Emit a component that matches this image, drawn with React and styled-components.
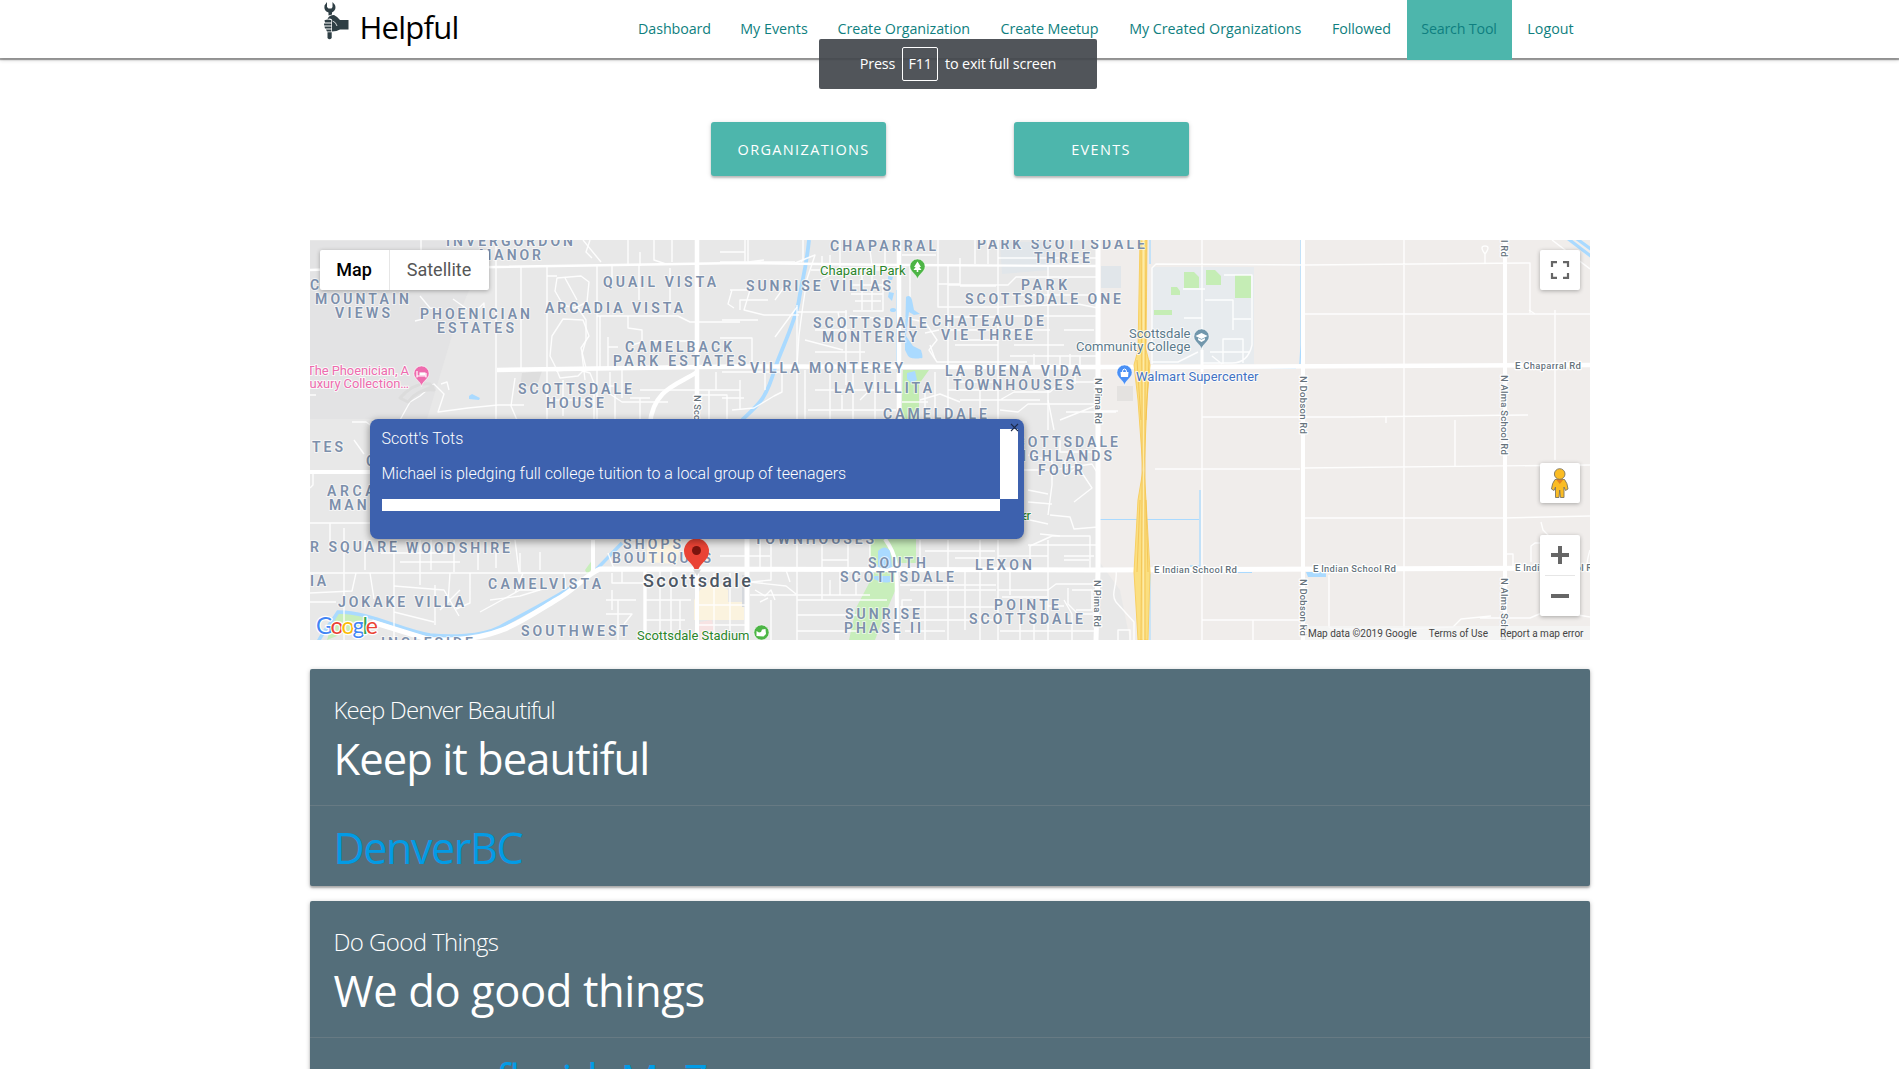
import React from "react";
import styled, { createGlobalStyle } from "styled-components";

const GlobalStyle = createGlobalStyle`
  * { box-sizing: border-box; }
  html, body { margin: 0; background: #fff; }
  body {
    height: 100vh;
    overflow: hidden;
    font-family: "Segoe UI", "Open Sans", "Noto Sans", sans-serif;
  }
`;

/* ---------- navigation ---------- */

const Nav = styled.nav`
  height: 58px;
  background: #fff;
  box-shadow: 0 2px 1px rgba(0, 0, 0, 0.33), 0 2px 4px rgba(0, 0, 0, 0.2);
`;

const NavInner = styled.div`
  width: 1280px;
  margin: 0 auto;
  display: flex;
  justify-content: space-between;
  align-items: flex-start;
`;

const Brand = styled.a`
  display: flex;
  align-items: flex-start;
  padding-left: 13px;
  gap: 9px;
  color: #000;
  font-size: 31px;
  line-height: 55px;
  letter-spacing: -0.75px;
`;

const NavList = styled.ul`
  display: flex;
  list-style: none;
  margin: 0;
  padding: 0;
`;

const NavItem = styled.li`
  width: ${(p) => p.$w}px;
  height: 60px;
  line-height: 57px;
  text-align: center;
  white-space: nowrap;
  font-size: 14.3px;
  letter-spacing: ${(p) => p.$ls || 0}px;
  color: #0f7f80;
  background: ${(p) => (p.$active ? "#4db6ac" : "transparent")};
`;

/* ---------- browser notice ---------- */

const Notice = styled.div`
  position: absolute;
  left: 819px;
  top: 39px;
  width: 278px;
  height: 50px;
  padding-bottom: 1px;
  border-radius: 2px;
  background: rgba(68, 72, 77, 0.93);
  color: #fff;
  display: flex;
  align-items: center;
  justify-content: center;
  font-size: 14.4px;
  letter-spacing: -0.2px;
  white-space: nowrap;
  gap: 7px;
`;

const Key = styled.span`
  width: 36px;
  height: 34px;
  border: 1px solid #fff;
  border-radius: 2px;
  display: flex;
  align-items: center;
  justify-content: center;
`;

/* ---------- page body ---------- */

const Main = styled.main`
  width: 1280px;
  margin: 0 auto;
  padding-top: 64px;
`;

const ButtonRow = styled.div`
  display: flex;
  justify-content: center;
  gap: 128px;
  height: 118px;
`;

const Button = styled.button`
  width: 175px;
  height: 54px;
  border: 0;
  border-radius: 3px;
  padding: ${(p) => p.$pad || "0"};
  text-align: ${(p) => (p.$pad ? "left" : "center")};
  background: #4db6ac;
  color: #fff;
  font-family: inherit;
  font-size: 14.5px;
  letter-spacing: ${(p) => p.$ls}px;
  text-transform: uppercase;
  white-space: nowrap;
  box-shadow: 0 2px 2px rgba(0, 0, 0, 0.2), 0 1px 5px rgba(0, 0, 0, 0.14);
`;

const MapFrame = styled.section`
  position: relative;
  height: 400px;
  overflow: hidden;
  background: #e8e8e8;
  font-family: Roboto, sans-serif;
`;

const MapSvg = styled.svg`
  display: block;
  width: 1280px;
  height: 400px;
`;

const MapTypes = styled.div`
  position: absolute;
  left: 10px;
  top: 10px;
  display: flex;
  height: 40px;
  background: #fff;
  border-radius: 2px;
  box-shadow: 0 1px 4px rgba(0, 0, 0, 0.3);
`;

const MapType = styled.div`
  width: ${(p) => p.$w}px;
  line-height: 40px;
  text-align: center;
  font-size: 18px;
  font-weight: ${(p) => (p.$on ? 500 : 400)};
  color: ${(p) => (p.$on ? "#000" : "#565656")};
  border-left: ${(p) => (p.$on ? "0" : "1px solid #e6e6e6")};
`;

const Control = styled.div`
  position: absolute;
  right: 10px;
  top: ${(p) => p.$top}px;
  width: 40px;
  height: ${(p) => p.$h || 40}px;
  background: #fff;
  border-radius: 2px;
  box-shadow: 0 1px 4px rgba(0, 0, 0, 0.3);
  svg { display: block; }
`;

const Credits = styled.div`
  position: absolute;
  right: 0;
  bottom: 0;
  height: 14px;
  padding: 0 6px 0 3px;
  display: flex;
  gap: 12px;
  background: rgba(245, 245, 245, 0.75);
  color: #444;
  font-size: 10px;
  line-height: 15px;
  letter-spacing: 0;
  white-space: nowrap;
`;

const InfoWindow = styled.div`
  position: absolute;
  left: 60px;
  top: 179px;
  width: 654px;
  height: 120px;
  padding: 10px 6px 28px 12px;
  border-radius: 8px;
  background: #3d61ae;
  color: #fff;
  box-shadow: 0 2px 7px 1px rgba(0, 0, 0, 0.35);
  display: grid;
  grid-template-columns: 618px 18px;
  grid-template-rows: 70px 12px;
  font-size: 16px;
  font-weight: 300;
`;

const InfoText = styled.div`
  p { margin: 0 0 16px; line-height: 19px; }
`;

const ScrollTrack = styled.div`
  background: #fff;
`;

const CloseIcon = styled.svg`
  position: absolute;
  right: 5px;
  top: 4px;
`;

const Card = styled.article`
  height: 217px;
  margin-bottom: 15px;
  border-radius: 2px;
  background: #546e7a;
  color: #fff;
  box-shadow: 0 2px 2px rgba(0, 0, 0, 0.24), 0 1px 5px rgba(0, 0, 0, 0.22);
`;

const Cards = styled.div`
  padding-top: 29px;
`;

const CardBody = styled.div`
  height: 136px;
  padding: 24px 24px 0;
`;

const CardTitle = styled.div`
  font-size: 24px;
  font-weight: 300;
  line-height: 33px;
  letter-spacing: ${(p) => p.$ls}px;
`;

const CardText = styled.div`
  font-size: 43.5px;
  line-height: 66px;
  letter-spacing: ${(p) => p.$ls}px;
`;

const CardAction = styled.div`
  height: 81px;
  padding: 2px 24px 0;
  border-top: 1px solid rgba(160, 160, 160, 0.25);
  color: #039be5;
  font-size: 43px;
  line-height: 80px;
  letter-spacing: ${(p) => p.$ls}px;
`;

/* ---------- map data ---------- */

const AREAS = [
  ["M310 241c0 30 0 0 0 0h175l-8 30-20 48-30 100h-117z", "#e3e3e4"],
  ["M1098 240H1590V640H1130L1120 590L1098 560Z", "#f0edeb"],
  ["M1000 242h50v28l-48 4zM1101 266h20v22h-20z", "#e1e6ea"],
  ["M1152 267H1254V364H1152Z", "#e7ebee"],
  ["M522 373l20-2-4 12-18 6z", "#dedede"],
  ["M647 540h34l-4 24-30-2zM700 590l14-12 14 12v12h16v18h-50v-20z", "#fbf3df"],
  ["M700 622l12-2 4 20h-20z", "#f7e3e3"],
  ["M1117 386h16v15h-16z", "#e4e2e0"],
  ["M742 575h6v32h-6z", "#d5d8dd"],
  ["M1184 272h10l5 5v11h-15zM1206 270h9l6 6v9h-15zM1171 287h6l3 4v4h-9zM1235 275h16v23h-16z", "#c5edb5"],
  ["M1154 310h18v5h-18z", "#c5edb5"],
  ["M903 370h26l-10 14v36h-17v-22z", "#c3ecb2"],
  ["M870 539h46v24h-20l-1 28-13 30-7 19h-26l7-32 22-42-8-8z", "#c8eebb"],
  ["M585 570l8-11 1 8-7 7zM335 614l12-3 18 7-6 9-20 8-12 5z", "#c8eebb"],
];

const WATER = [
  "M906 297q4-3 6 3l2 10 6 4-6 1-5-3-3 24 7 10 8 4q3 10 0 8-12 2-14-4l-2-4 0-16z",
  "M888 276l5 1-1 3h-4zM889 292l5 1-2 8-4-4zM890 310a3 2 0 1 0 6 0a3 2 0 1 0-6 0z",
  "M907 373l8-2 2 9-6 3-4-4z",
  "M878 551q7-7 12 0l2 16-6 2-8-2zM874 576h16v6q-8 2-16-3z",
  "M469 396l3-2 8 4-1 2-10-1z",
  "M1306 572h20v5h-18z",
];

const MAJOR = [
  ["M697 240V430M697 372C680 384 653 388 650 424", 4.5],
  ["M310 270L340 269L497 267L740 263L900 265L1098 266", 2.4],
  ["M497 370L740 366.5L1098 367H1152L1590 365", 4.5],
  ["M899 240V430", 4.5],
  ["M885 539C900 560 896 566 897 640", 4],
  ["M1098 240V572L1096 640", 5],
  ["M1590 568L1098 570L600 569C585 575 575 590 556 600C520 622 500 638 450 640L430 640L372 622", 5],
  ["M310 472H372", 4],
  ["M593 540V572", 4],
  ["M747 539V640", 5],
  ["M697 560V640", 4],
  ["M1303 240V640M1505 240V640", 4],
  ["M1202 350V372", 3],
  ["M645 570V640", 3.4],
];

const MINOR = [
  // west side
  "M421 240V266M496 240V420M521 267V369M547 265V420M597 265V420M583 240l18 22M612 265V283M639 265V300M670 268V310",
  "M597 316H678l12 6h50M547 276h10M420 296l10 12 12 2M453 299l14 10M478 309l6-6 0 10M415 321l8-2M557 278l24-2 8 6-2 20-12 6-12-3-8-14z",
  "M565 278l12 22M563 319l20 1 6 16-8 12 5 20-8 8-18 2-4-10-6-12 2-20z",
  "M628 316v12l14 2v12l-10 3M650 341h45M608 337v32M608 347h10M578 308l8 12v20l-4 14 3 26M600 316V370M605 386h10v34",
  "M640 252v14M654 240v20l12 4M672 240v22M628 240v26M590 240l-4 12 6 6",
  "M556 371l20-2 14 4 4 10v36M550 400h44M563 380v36M610 372v22l12 8h46M622 370v28M630 398h20M640 398v22M515 378l-4 28 6 14",
  "M697 395l30 0v25M709 390v30M640 390H740M716 372v18",
  "M400 420l10-18 10-6 14-12 10 10-6 18 30-4 30-3 26 0M441 384l6-2 2 8",
  "M352 422h14l6 4v30M354 440l10 14M310 488l3-3v-12M310 395h6",
  // south west
  "M310 523H370M330 523v28M344 528V640M365 540v30M310 573h284M394 540v100M420 540v45M431 540v30M454 540v32M478 540v30M496 540v28M515 540l4 32M540 552v18",
  "M381 553h70M400 562h60M520 553v20h60M435 585l0 40M450 573l-2 30M310 602h26M394 586l50 4 15 26M460 590l-20 20M470 573v30l-14 6M490 600l30-4 26-8",
  "M356 573l-4 18-42 2M370 573l4 26M394 612l40 10M480 612l40-22h20M523 573l-8 20M564 573l2 16",
  "M612 573v10h34M622 583v-14M645 600h46M645 620h40M671 571v69M660 571v69M680 600v40M606 600h30M606 614h26l-8 10M618 600v40M612 590v20",
  "M697 605h50M714 573v67M730 573v67M697 625h50M625 540h20M608 553l6 16",
  // downtown to Hayden
  "M720 262h75M745 240v24M748 240v22l16-2M720 252h25M795 263l20-8-8 24-4 26-4 30-2 30M803 240v20l-2 2",
  "M730 290h20l-6 20 20 5h35M722 320h36M775 337l22-30M732 290l-4 14 6 4M740 310V300h28M775 300l10-14M720 338h32v30",
  "M797 305V430M797 312h50M846 310v75M811 270h82M830 255v20l-15 8M838 312l4 20M815 330h35M805 340l38 10M850 316l40 3M815 352h50M860 330v36",
  "M851 285h32M851 294h32M855 301h26M853 311h30v-32M862 270v40M872 270v40M822 256v10M840 240v28h55M870 250l2 16M885 240v26",
  "M805 370v50M722 372h60v20l-8 4-20 12-22 2M740 380v30M722 398h22M765 372v18M830 372v48M815 390h80M853 370v50M875 370v50M808 410h88M860 400l10-10M842 395v15",
  "M797 539V640M771 540v40l-20 2M720 556h50M822 540v60M848 540v36M870 540v30M750 595h120M771 600v40M797 600h90M797 615h60M797 631h60M750 582l36 4 10 8M790 582l-4-12",
  "M755 590l10 6 6-6 4 10M760 602l8-4M830 580v15M840 572v23M856 572v23M822 560h26M760 540v30",
  // Hayden to Pima
  "M938 240v67h60M948 265V430M998 240V430M1048 266V430M975 240v24M988 240v24M960 286h36M960 258v26h-22M902 255h34M910 265v40M948 285h50",
  "M998 258h100M998 285h10l8-8h80M1012 295h86M998 307l80-3 20 4M1005 316h93M948 317h50M948 330h50M1010 330h40M960 340h38M905 318l20 4 12 18-8 10 8 12h90",
  "M925 333l14-3M930 345l5 14M955 345h43M1014 345h50M1064 330h30M1010 356h88M1070 366v-12M1060 366v-10M1080 366v-10M1034 366v-12",
  "M960 372v10h40M948 390h50M935 372v48M920 400l20-6 20 8M902 402h26M980 385v40M960 400h80M1000 400l14-8h36l12-10h36M1000 410l18 2 10-8h70M1048 400l6 30M1060 420l40-16M925 385v30M1075 372v12M1066 412h50",
  "M1028 455l24 6v24l-4 30M1052 470l40-6 6 10M1028 490l20 4M1070 450l10 20 12 18-18 14M1065 460v16l14-10M1028 502l24 2M1024 470h30M1060 440v12h36M1050 515l20 2 4 12 24-2M1040 534l20 2M1030 520l18 4M1028 545h70",
  "M920 540v30M948 540V640M980 540V640M998 540V640M1048 540V640M925 551h70M955 558h40M998 556h50M1030 566v-20l22-10h38v34M1064 556h30M1064 560h25M900 585h96M900 607h98M910 590h86M910 620h88M905 631h40M925 590v50M965 570v60",
  "M998 590h50l8-6h42M1002 597h45M1010 570v25M1068 588v16l10 10h20M1072 590l20 0v20h-16M1000 631h96M1064 600l8 14v26M1048 606h16M912 600h-10v20M1020 600v40M1034 600v40",
  // east of Pima
  "M1098 411h20M1116 570c2 14-6 24 0 32l18 20v18M1118 640v-10h12v10",
  "M1152 364V268l4-4 150 1 220-2h4v50M1202 240V640M1404 240V640M1555 310V460M1202 417H1350l178-2M1303 314H1590M1303 468L1590 465M1155 469h145M1303 518h200l90-2",
  "M1455 420v46M1529 310l6 4M1202 620h98M1253 620v20M1329 575v52l4 2h70l50-2 8-8 30-3M1480 618h50l14-6M1541 522l2 8 6 6v14M1531 562v-16l4-3h10M1505 554h8v14M1527 567h63M1560 612l30 5M1590 550q-6 20 0 22",
  "M1485 264v-10q-6-8 0-8 6 0 0 8M1552 240l38 29M1386 417v6",
  "M1224 275h28v70q-4 18-20 18h-30M1205 300h28v30M1233 319h18M1223 364v-25h20v24M1152 362l26 0 20-10M1212 356l10 8M1183 289h22M1184 318h18M1210 352h40",
];

const CANALS = [
  ["M809 240C806 270 802 280 799 300C796 320 782 348 775 368C766 400 758 405 742 420", 3.8],
  ["M622 543L593 573C570 590 540 605 500 627C480 637 450 637 430 635C400 630 370 612 338 612C330 625 324 630 318 642", 3.4],
  ["M1150 240V264M1301 240V345L1300 364M1296 368l-60-1M897 290V372M1200 490V566M1200 510V566H1190", 1.3],
  ["M1100 519.5H1199M1150 574V640M1230 572.500h22", 1.1],
  ["M1567 238L1592 257M1573 236L1592 250", 3.2],
];

const HOODS = [
  ["INVERGORDON", 446, 573, 246], ["MANOR", 479, 541, 260],
  ["C", 310, 0, 290], ["MOUNTAIN", 315, 409, 304], ["VIEWS", 335, 390, 318],
  ["PHOENICIAN", 420, 530, 319], ["ESTATES", 437, 514, 333],
  ["QUAIL VISTA", 603, 716, 287], ["ARCADIA VISTA", 545, 683, 313],
  ["CAMELBACK", 625, 732, 352], ["PARK ESTATES", 613, 746, 366],
  ["SCOTTSDALE", 518, 632, 394], ["HOUSE", 546, 604, 408],
  ["CHAPARRAL", 830, 936, 251], ["SUNRISE VILLAS", 746, 891, 291],
  ["SCOTTSDALE", 813, 927, 328], ["MONTEREY", 822, 917, 342],
  ["VILLA MONTEREY", 750, 903, 373], ["LA VILLITA", 834, 932, 393],
  ["CAMELDALE", 883, 987, 419],
  ["PARK SCOTTSDALE", 977, 1145, 249], ["THREE", 1034, 1090, 263],
  ["PARK", 1021, 1067, 290], ["SCOTTSDALE ONE", 965, 1121, 304],
  ["CHATEAU DE", 932, 1044, 326], ["VIE THREE", 941, 1033, 340],
  ["LA BUENA VIDA", 945, 1081, 376], ["TOWNHOUSES", 953, 1074, 390],
  ["SCOTTSDALE", 1004, 1118, 447], ["HIGHLANDS", 1009, 1112, 461], ["FOUR", 1038, 1083, 475],
  ["TES", 312, 343, 452], ["C", 366, 0, 466],
  ["ARCADIA", 327, 408, 496], ["MANOR", 329, 391, 510],
  ["R SQUARE", 310, 397, 552], ["WOODSHIRE", 406, 510, 553],
  ["IA", 310, 326, 586], ["JOKAKE VILLA", 338, 464, 607],
  ["CAMELVISTA", 488, 601, 589],
  ["SHOPS", 623, 681, 549], ["BOUTIQUES", 612, 711, 563],
  ["SOUTHWEST", 521, 628, 636], ["INGLESIDE", 381, 473, 648],
  ["TOWNHOUSES", 754, 874, 544],
  ["SOUTH", 868, 926, 568], ["SCOTTSDALE", 840, 954, 582],
  ["SUNRISE", 845, 920, 619], ["PHASE II", 844, 921, 633],
  ["LEXON", 975, 1032, 570], ["POINTE", 994, 1059, 610], ["SCOTTSDALE", 969, 1083, 624],
];

const PLACES = [
  ["Chaparral Park", 820, 905.500, 274.500, "#2b862b"],
  ["Scottsdale", 1129, 1190.500, 337.500, "#5b7a8b"],
  ["Community College", 1076, 1190.500, 350.500, "#5b7a8b"],
  ["Walmart Supercenter", 1136, 1258.500, 380.500, "#4272c4"],
  ["The Phoenician, A", 307, 409, 374.500, "#ee6cae"],
  ["Luxury Collection…", 303, 409, 387.500, "#ee6cae"],
  ["Scottsdale Stadium", 637, 749.500, 640, "#2b862b"],
  ["er", 1022, 1031, 520, "#2b862b"],
];

const STREETS = [
  ["E Chaparral Rd", 1515, 1581, 368.500],
  ["E Indian School Rd", 1154, 1237, 572.500],
  ["E Indian School Rd", 1313, 1396, 572],
  ["E Indian School Rd", 1515, 1598, 571],
];

const CROSS_STREETS = [
  ["N Scottsdale Rd", 694, 395, 464],
  ["N Pima Rd", 1095, 378, 424],
  ["N Pima Rd", 1094, 580, 627],
  ["N Dobson Rd", 1300, 376, 434],
  ["N Dobson Rd", 1300, 579, 636],
  ["N Alma School Rd", 1501, 375, 455],
  ["N Alma School Rd", 1501, 578, 658],
  ["l Rd", 1501, 240, 257],
];

/* ---------- map parts ---------- */

const PinShape = ({ x, y, color, children }) => (
  <g transform={`translate(${x} ${y})`}>
    <path d="M0 11.500C-1 6-7.600 4-7.600-1.500A7.600 7.600 0 0 1 7.600-1.500C7.600 4 1 6 0 11.500Z" fill={color} stroke="#fff" strokeWidth="0.6" />
    {children}
  </g>
);

const MapLabel = ({ text, x, end, y, ...rest }) => (
  <text x={x} y={y} textLength={end ? end - x : undefined} {...rest}>{text}</text>
);

const CityMap = () => (
  <MapSvg viewBox="310 240 1280 400" aria-label="Map of Scottsdale">
    <rect x="310" y="240" width="1280" height="400" fill="#e8e8e8" />
    {AREAS.map(([d, c]) => <path key={d} d={d} fill={c} />)}
    <g fill="none">
      {CANALS.map(([d, w]) => <path key={d} d={d} stroke="#aadaff" strokeWidth={w} />)}
    </g>
    <g fill="none" stroke="#fff" strokeLinejoin="round">
      {MINOR.map((d) => <path key={d} d={d} strokeWidth="1.4" opacity="0.9" />)}
      <path d="M400 398q14-16 30-14l4 6q-16-2-26 12zM420 392l14-6" stroke="#dcdcdc" strokeWidth="3" />
      {MAJOR.map(([d, w]) => <path key={d} d={d} strokeWidth={w} />)}
    </g>
    {WATER.map((d) => <path key={d} d={d} fill="#aadaff" />)}
    <g fill="none">
      <path d="M1140 240L1138 350L1134 365L1138 400L1143 470L1138 500L1134 572L1138 640H1148L1150 572L1146 500L1144 470L1147 400L1150 365L1146 350L1147 240Z" fill="#fbdf80" stroke="#f8cf62" strokeWidth="1" />
      <path d="M1143.500 240V640" stroke="#fdeba8" strokeWidth="1.6" />
      <path d="M1141 240L1142 400V500L1141 640M1146 240L1145 400V500L1145 640M1137 360L1141 420M1149 360L1146 420M1137 572L1140 500M1148 572L1146 500" stroke="#f3c04e" strokeWidth="0.8" />
    </g>
    <g fontFamily="Roboto, sans-serif" stroke="#fff" strokeOpacity="0.75" strokeLinejoin="round" paintOrder="stroke">
      <g fontSize="14" fontWeight="600" fill="#7c8fab" strokeWidth="2" strokeOpacity="0.6">
        {HOODS.map(([t, x, e, y]) => <MapLabel key={`${t}${x}${y}`} text={t} x={x} end={e} y={y} />)}
      </g>
      <g fontSize="9.600" fontWeight="500" fill="#66737c" strokeWidth="2.400" strokeOpacity="1">
        {STREETS.map(([t, x, e, y]) => <MapLabel key={x} text={t} x={x} end={e} y={y} />)}
        {CROSS_STREETS.map(([t, x, y, e]) => (
          <g key={`${x}-${y}`} transform={`translate(${x} ${y}) rotate(90)`}>
            <MapLabel text={t} x={0} end={e - y} y={0} />
          </g>
        ))}
      </g>
      <g fontSize="13" strokeWidth="2" strokeOpacity="0.8">
        {PLACES.map(([t, x, e, y, c]) => <MapLabel key={`${t}${y}`} text={t} x={x} end={e} y={y} fill={c} />)}
      </g>
      <MapLabel text="Scottsdale" x={643} end={751} y={586.500} fontSize="18" fontWeight="500" fill="#4d5763" strokeWidth="2.500" />
    </g>

    <PinShape x={917.500} y={268} color="#4db546">
      <path d="M0-6.500L3.500-1H1.800L4 2H0.800V4H-0.800V2H-4L-1.800-1H-3.500Z" fill="#fff" />
    </PinShape>
    <PinShape x={421.500} y={375} color="#ee6cae">
      <path d="M-4.500-4V2.500M-4.500 1H4.500M4.500 2.500V-2" stroke="#fff" strokeWidth="1.2" />
      <path d="M-2-2.600h6V0.500h-6z" fill="#fff" />
    </PinShape>
    <PinShape x={1201.500} y={338} color="#7197ac">
      <path d="M0-5L6-2L0 1L-6-2ZM-3.400 0L0 1.800L3.400 0V2L0 4L-3.400 2Z" fill="#fff" />
    </PinShape>
    <PinShape x={1124.500} y={374} color="#4a90f5">
      <path d="M-4-2H4L3.500 3H-3.500Z" fill="#fff" />
      <path d="M-2-2Q-2-5 0-5T2-2" fill="none" stroke="#fff" strokeWidth="1" />
    </PinShape>
    <circle cx="761.500" cy="632.500" r="7.600" fill="#4db546" stroke="#fff" strokeWidth="0.6" />
    <path d="M756.500 636v-5l2.500 1.500 2-0.500 1-2.500 3.500-0.500 0.500 5-2.500 2.500z" fill="#fff" />

    <path d="M693 569.500L697 576L701 569.500Z" fill="#d8d8d8" />
    <path d="M694.500 569C691.500 562 684 560 684 551A12.500 12.500 0 0 1 709 551C709 560 701.500 562 698.500 569Z" fill="#ea4335" />
    <circle cx="696.500" cy="550.500" r="4.500" fill="#7b140e" />

    <text x="316" y="633.500" fontFamily="Lato, Roboto, sans-serif" fontSize="23" textLength="62" fontWeight="400"
      stroke="#fff" strokeWidth="2.500" paintOrder="stroke" strokeLinejoin="round">
      <tspan fill="#4285f4">G</tspan><tspan fill="#ea4335">o</tspan><tspan fill="#fbbc05">o</tspan>
      <tspan fill="#4285f4">g</tspan><tspan fill="#34a853">l</tspan><tspan fill="#ea4335">e</tspan>
    </text>
  </MapSvg>
);

const Logo = () => (
  <svg width="28" height="42" viewBox="0 0 28 42" fill="#2f3f45">
    <path d="M4 2L1.500 5.500Q0.500 11 5.500 12.500V15.500L9 14.500V12.500Q14 10 12 5L9.500 2V7L8.500 8.500H5.500L4 7Z" />
    <path d="M4.500 19Q6 15 11 15Q15 17 17 20H25.500V29.500H17Q14 31.500 9 31.500V19.500L7 18.500Z" />
    <path d="M1.500 20.200Q5 18.600 8.300 20.200V22.400H2ZM1 23.400H8.300V25.600H1.200ZM1.500 26.600H8.300V28.600H2ZM3 29.600H8.300V31.400H4Z" />
    <path d="M4.500 32.300H8.700V38Q6.500 40.500 4.500 38Z" />
    <path d="M9.500 21Q13 22 14 26" fill="none" stroke="#fff" strokeWidth="0.8" />
  </svg>
);

const NAV = [
  ["Dashboard", 102, -0.1],
  ["My Events", 97, 0],
  ["Create Organization", 162.5, -0.05],
  ["Create Meetup", 129, -0.1],
  ["My Created Organizations", 202.5, -0.02],
  ["Followed", 90, -0.1],
  ["Search Tool", 105, -0.2],
  ["Logout", 78, 0],
];

const ORGS = [
  { title: "Keep Denver Beautiful", tls: -0.9, text: "Keep it beautiful", ls: -0.95, link: "DenverBC", lls: -1.4 },
  { title: "Do Good Things", tls: -0.6, text: "We do good things", ls: -0.4, link: "www.rsrfloridaMoZ", lls: -0.7 },
];

export default function App() {
  return (
    <>
      <GlobalStyle />
      <Nav>
        <NavInner>
          <Brand><Logo />Helpful</Brand>
          <NavList>
            {NAV.map(([label, w, ls]) => (
              <NavItem key={label} $w={w} $ls={ls} $active={label === "Search Tool"}>{label}</NavItem>
            ))}
          </NavList>
        </NavInner>
      </Nav>
      <Notice>
        <span>Press</span>
        <Key>F11</Key>
        <span>to exit full screen</span>
      </Notice>
      <Main>
        <ButtonRow>
          <Button $pad="0 0 0 27px" $ls={1.35}>Organizations</Button>
          <Button $ls={1.35}>Events</Button>
        </ButtonRow>
        <MapFrame>
          <CityMap />
          <MapTypes>
            <MapType $w={69} $on>Map</MapType>
            <MapType $w={100}>Satellite</MapType>
          </MapTypes>
          <Control $top={10}>
            <svg width="40" height="40" fill="none" stroke="#666" strokeWidth="2.200">
              <path d="M12 17V12.100H17M23 12.100H28V17M28 23V27.900H23M17 27.900H12V23" />
            </svg>
          </Control>
          <Control $top={223}>
            <svg width="40" height="40" fill="#fbbc23" stroke="#7d7560" strokeWidth="0.9">
              <path d="M15 16.500Q12 20 11.500 26L14 27.500L15.500 24V34.500H19L19.700 27L20.500 34.500H24V24L25.500 27.500L28 26Q27.500 20 24.500 16.500Z" />
              <path d="M16 16.500H23.500L19.800 21Z" fill="#e5821f" stroke="none" />
              <circle cx="19.700" cy="11" r="5.300" />
            </svg>
          </Control>
          <Control $top={295} $h={81}>
            <svg width="40" height="81">
              <path d="M11 20H29M20 11V29M11 61H29" stroke="#666" strokeWidth="4" />
              <path d="M5 40.500H35" stroke="#e6e6e6" strokeWidth="1" />
            </svg>
          </Control>
          <Credits>
            <span>Map data ©2019 Google</span>
            <span>Terms of Use</span>
            <span>Report a map error</span>
          </Credits>
          <InfoWindow>
            <InfoText>
              <p>Scott's Tots</p>
              <p>Michael is pledging full college tuition to a local group of teenagers</p>
            </InfoText>
            <ScrollTrack />
            <ScrollTrack />
            <CloseIcon width="9" height="9" stroke="#1c2a4a" strokeWidth="1.1">
              <path d="M1 1L8 8M8 1L1 8" />
            </CloseIcon>
          </InfoWindow>
        </MapFrame>
        <Cards>
          {ORGS.map((o) => (
            <Card key={o.title}>
              <CardBody>
                <CardTitle $ls={o.tls}>{o.title}</CardTitle>
                <CardText $ls={o.ls}>{o.text}</CardText>
              </CardBody>
              <CardAction $ls={o.lls}>{o.link}</CardAction>
            </Card>
          ))}
        </Cards>
      </Main>
    </>
  );
}
